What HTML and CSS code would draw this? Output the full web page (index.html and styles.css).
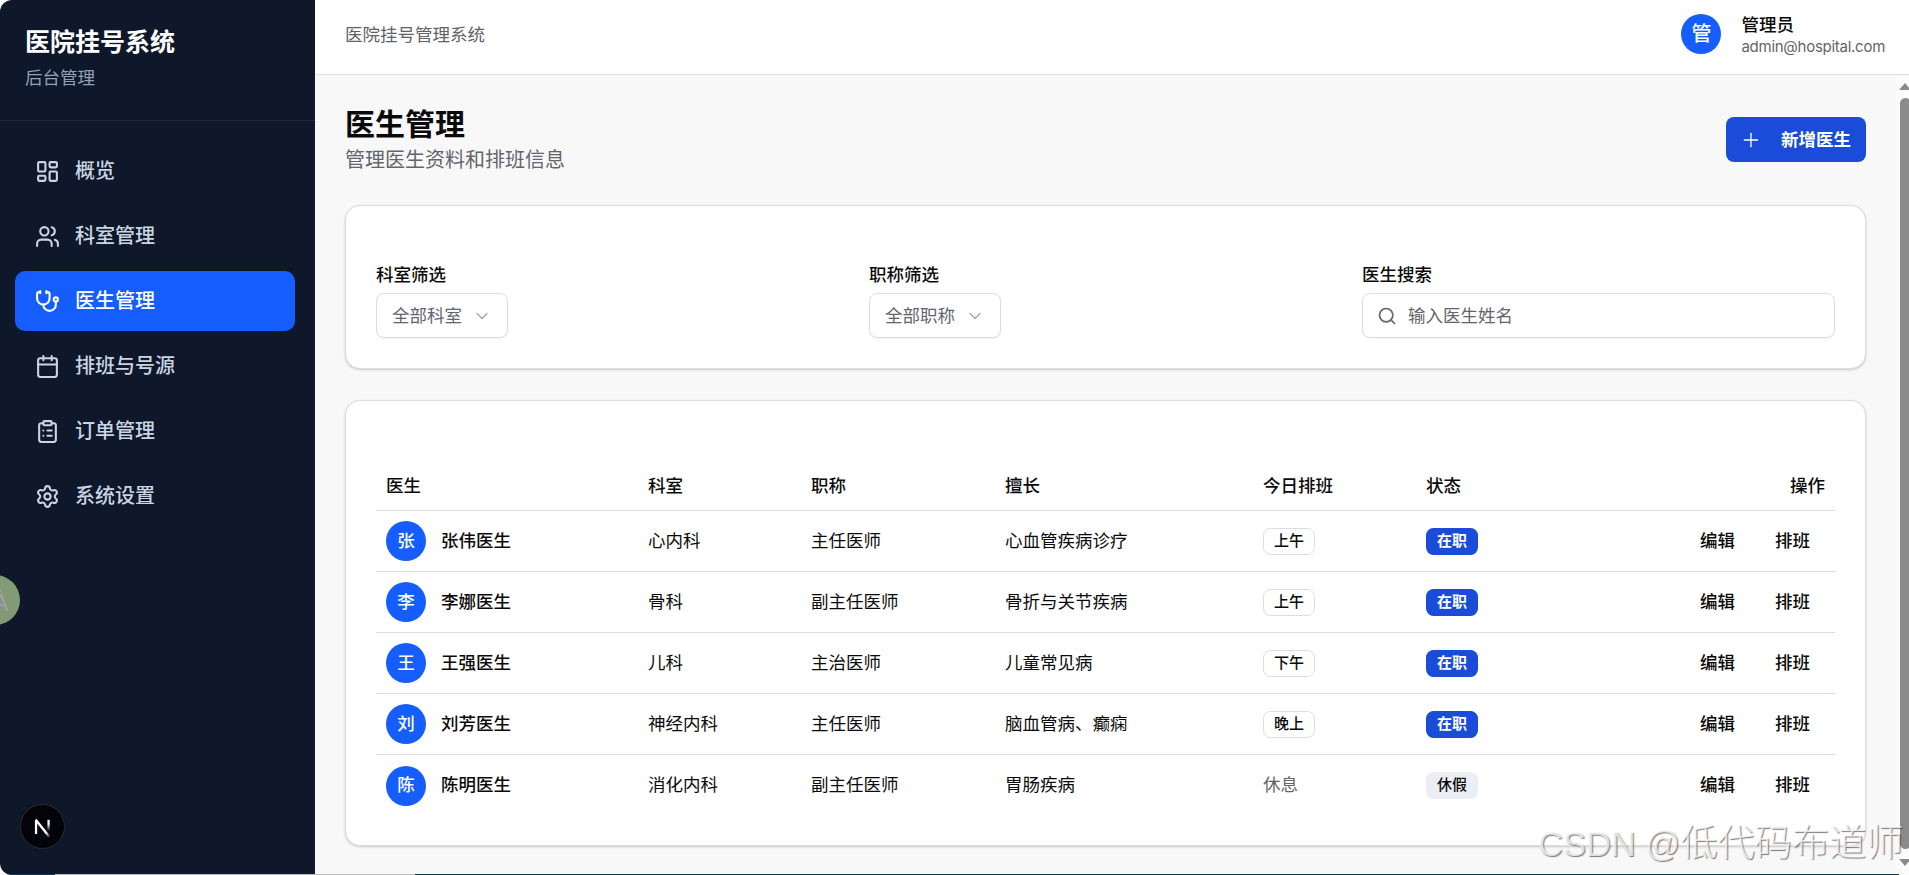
FILE: index.html
```
<!DOCTYPE html>
<html lang="zh-CN">
<head>
	<meta charset="utf-8">
	<title>医院挂号系统</title>
	<link rel="stylesheet" href="styles.css">
</head>
<body>
	<div class="app">
		<aside class="sidebar">
			<div class="brand">
				<h1>医院挂号系统</h1>
				<p>后台管理</p>
			</div>
			<nav class="nav">
				<a class="nav-item">
					<svg class="icon" viewBox="0 0 24 24"><rect width="7" height="9" x="3" y="3" rx="1"/><rect width="7" height="5" x="14" y="3" rx="1"/><rect width="7" height="9" x="14" y="12" rx="1"/><rect width="7" height="5" x="3" y="16" rx="1"/></svg>
					<span>概览</span>
				</a>
				<a class="nav-item">
					<svg class="icon" viewBox="0 0 24 24"><path d="M16 21v-2a4 4 0 0 0-4-4H6a4 4 0 0 0-4 4v2"/><path d="M16 3.128a4 4 0 0 1 0 7.744"/><path d="M22 21v-2a4 4 0 0 0-3-3.87"/><circle cx="9" cy="7" r="4"/></svg>
					<span>科室管理</span>
				</a>
				<a class="nav-item active">
					<svg class="icon" viewBox="0 0 24 24"><path d="M11 2v2"/><path d="M5 2v2"/><path d="M5 3H4a2 2 0 0 0-2 2v4a6 6 0 0 0 12 0V5a2 2 0 0 0-2-2h-1"/><path d="M8 15a6 6 0 0 0 12 0v-3"/><circle cx="20" cy="10" r="2"/></svg>
					<span>医生管理</span>
				</a>
				<a class="nav-item">
					<svg class="icon" viewBox="0 0 24 24"><path d="M8 2v4"/><path d="M16 2v4"/><rect width="18" height="18" x="3" y="4" rx="2"/><path d="M3 10h18"/></svg>
					<span>排班与号源</span>
				</a>
				<a class="nav-item">
					<svg class="icon" viewBox="0 0 24 24"><rect width="8" height="4" x="8" y="2" rx="1"/><path d="M16 4h2a2 2 0 0 1 2 2v14a2 2 0 0 1-2 2H6a2 2 0 0 1-2-2V6a2 2 0 0 1 2-2h2"/><path d="M12 11h4"/><path d="M12 16h4"/><path d="M8 11h.01"/><path d="M8 16h.01"/></svg>
					<span>订单管理</span>
				</a>
				<a class="nav-item">
					<svg class="icon" viewBox="0 0 24 24"><path d="M9.671 4.136a2.34 2.34 0 0 1 4.659 0 2.34 2.34 0 0 0 3.319 1.915 2.34 2.34 0 0 1 2.33 4.033 2.34 2.34 0 0 0 0 3.831 2.34 2.34 0 0 1-2.33 4.033 2.34 2.34 0 0 0-3.319 1.915 2.34 2.34 0 0 1-4.659 0 2.34 2.34 0 0 0-3.32-1.915 2.34 2.34 0 0 1-2.33-4.033 2.34 2.34 0 0 0 0-3.831A2.34 2.34 0 0 1 6.35 6.051a2.34 2.34 0 0 0 3.319-1.915"/><circle cx="12" cy="12" r="3"/></svg>
					<span>系统设置</span>
				</a>
			</nav>
		</aside>

		<div class="main">
			<header class="topbar">
				<span class="topbar-title">医院挂号管理系统</span>
				<div class="user">
					<span class="avatar">管</span>
					<div class="user-info">
						<div class="user-name">管理员</div>
						<div class="user-mail">admin@hospital.com</div>
					</div>
				</div>
			</header>

			<div class="body">
				<div class="content">
					<div class="page-head">
						<div>
							<h2>医生管理</h2>
							<p>管理医生资料和排班信息</p>
						</div>
						<button class="btn-primary">
							<svg class="icon-sm thin" viewBox="0 0 24 24"><path d="M4 12h16"/><path d="M12 4v16"/></svg>
							<span>新增医生</span>
						</button>
					</div>

					<section class="card filters">
						<div class="field">
							<label>科室筛选</label>
							<button class="select"><span>全部科室</span><svg class="chevron" viewBox="0 0 24 24"><path d="m6 9 6 6 6-6"/></svg></button>
						</div>
						<div class="field">
							<label>职称筛选</label>
							<button class="select"><span>全部职称</span><svg class="chevron" viewBox="0 0 24 24"><path d="m6 9 6 6 6-6"/></svg></button>
						</div>
						<div class="field">
							<label>医生搜索</label>
							<div class="search">
								<svg class="icon-sm" viewBox="0 0 24 24"><circle cx="11" cy="11" r="8"/><path d="m21 21-4.3-4.3"/></svg>
								<span>输入医生姓名</span>
							</div>
						</div>
					</section>

					<section class="card list">
						<table>
							<colgroup>
								<col class="c-doctor"><col class="c-dept"><col class="c-title"><col class="c-skill"><col class="c-shift"><col class="c-status"><col>
							</colgroup>
							<thead>
								<tr><th>医生</th><th>科室</th><th>职称</th><th>擅长</th><th>今日排班</th><th>状态</th><th class="right">操作</th></tr>
							</thead>
							<tbody>
								<tr>
									<td><div class="doctor"><span class="avatar small">张</span>张伟医生</div></td>
									<td>心内科</td><td>主任医师</td><td>心血管疾病诊疗</td>
									<td><span class="badge outline">上午</span></td>
									<td><span class="badge primary">在职</span></td>
									<td><div class="actions"><a>编辑</a><a>排班</a></div></td>
								</tr>
								<tr>
									<td><div class="doctor"><span class="avatar small">李</span>李娜医生</div></td>
									<td>骨科</td><td>副主任医师</td><td>骨折与关节疾病</td>
									<td><span class="badge outline">上午</span></td>
									<td><span class="badge primary">在职</span></td>
									<td><div class="actions"><a>编辑</a><a>排班</a></div></td>
								</tr>
								<tr>
									<td><div class="doctor"><span class="avatar small">王</span>王强医生</div></td>
									<td>儿科</td><td>主治医师</td><td>儿童常见病</td>
									<td><span class="badge outline">下午</span></td>
									<td><span class="badge primary">在职</span></td>
									<td><div class="actions"><a>编辑</a><a>排班</a></div></td>
								</tr>
								<tr>
									<td><div class="doctor"><span class="avatar small">刘</span>刘芳医生</div></td>
									<td>神经内科</td><td>主任医师</td><td>脑血管病、癫痫</td>
									<td><span class="badge outline">晚上</span></td>
									<td><span class="badge primary">在职</span></td>
									<td><div class="actions"><a>编辑</a><a>排班</a></div></td>
								</tr>
								<tr>
									<td><div class="doctor"><span class="avatar small">陈</span>陈明医生</div></td>
									<td>消化内科</td><td>副主任医师</td><td>胃肠疾病</td>
									<td class="muted">休息</td>
									<td><span class="badge secondary">休假</span></td>
									<td><div class="actions"><a>编辑</a><a>排班</a></div></td>
								</tr>
							</tbody>
						</table>
					</section>
				</div>
				<div class="scrollbar">
					<span class="arrow up"></span>
					<span class="thumb"></span>
					<span class="arrow down"></span>
				</div>
			</div>
		</div>
	</div>

	<div class="translate-tab"><span>A</span></div>
	<div class="dev-badge">
		<svg viewBox="0 0 40 40">
			<defs>
				<linearGradient id="stem" x1="0" y1="0" x2="0" y2="1"><stop offset=".35" stop-color="#fff"/><stop offset="1" stop-color="#fff" stop-opacity="0"/></linearGradient>
				<linearGradient id="diag" x1="0" y1="0" x2="1" y2="1"><stop offset=".75" stop-color="#fff"/><stop offset="1" stop-color="#fff" stop-opacity=".1"/></linearGradient>
			</defs>
			<path d="M14 27V13.8" stroke="#fff" stroke-width="2.1"/>
			<path d="M13.7 13.8 26.5 29.8" stroke="url(#diag)" stroke-width="2.2"/>
			<rect x="24.6" y="13.8" width="2.1" height="10.5" fill="url(#stem)"/>
		</svg>
	</div>
	<div class="watermark"><span>CSDN @</span>低代码布道师</div>
	<div class="window-edge"></div>
</body>
</html>
```

FILE: styles.css
```
*{
	box-sizing: border-box;
}
html,body{
	margin: 0;
	padding: 0;
	height: 100%;
	overflow: hidden;
}
body{
	position: relative;
	background: #fff;
	color: #0a0a0a;
	font-family: "Liberation Sans", "Noto Sans CJK SC", sans-serif;
	font-size: 17.5px;
	line-height: 25px;
}
h1,h2,p{
	margin: 0;
}
button{
	font: inherit;
	border: none;
}
svg{
	fill: none;
	stroke: currentColor;
	stroke-width: 2;
	stroke-linecap: round;
	stroke-linejoin: round;
	flex-shrink: 0;
}
.app{
	display: flex;
	height: 100vh;
}

/* sidebar */
.sidebar{
	width: 315px;
	flex-shrink: 0;
	background: #0f172b;
	border-radius: 12px 0 0 12px;
}
.brand{
	height: 121px;
	padding: 25px 25px 0;
	border-bottom: 1px solid #1d293d;
}
.brand h1{
	color: #fff;
	font-size: 25px;
	font-weight: 700;
	line-height: 35px;
}
.brand p{
	margin-top: 6px;
	color: #90a1b9;
}
.nav{
	display: flex;
	flex-direction: column;
	gap: 5px;
	padding: 20px 20px 0 15px;
}
.nav-item{
	display: flex;
	align-items: center;
	gap: 15px;
	height: 60px;
	padding: 0 20px;
	border-radius: 10px;
	color: #cad5e2;
	font-size: 20px;
	font-weight: 500;
}
.nav-item span{
	padding-top: 1px;
}
.nav-item.active{
	background: #155dfc;
	color: #fff;
}
.icon{
	width: 25px;
	height: 25px;
}
.icon-sm{
	width: 20px;
	height: 20px;
}

/* top bar */
.main{
	flex: 1;
	min-width: 0;
	display: flex;
	flex-direction: column;
}
.topbar{
	display: flex;
	justify-content: space-between;
	align-items: center;
	height: 75px;
	padding: 0 24px 6px 30px;
	border-bottom: 1px solid #dcdce4;
}
.topbar-title{
	padding-top: 2px;
	color: #5f6368;
}
.user{
	display: flex;
	align-items: center;
	gap: 20px;
}
.user-info{
	padding-top: 2px;
}
.user-name{
	font-weight: 500;
	line-height: 24px;
}
.user-mail{
	color: #62656d;
	font-family: Inter, sans-serif;
	font-size: 15px;
	letter-spacing: -.27px;
	line-height: 20px;
}
.avatar{
	display: flex;
	align-items: center;
	justify-content: center;
	width: 40px;
	height: 40px;
	border-radius: 50%;
	background: #155dfc;
	color: #fff;
	font-size: 20px;
	font-weight: 500;
}
.avatar.small{
	font-size: 17.5px;
}

/* content */
.body{
	flex: 1;
	display: flex;
	background: #f8f8f8;
}
.content{
	flex: 1;
	padding: 30px 30px 0;
}
.page-head{
	display: flex;
	justify-content: space-between;
	align-items: center;
	height: 70px;
	margin-bottom: 30px;
}
.page-head h2{
	font-size: 30px;
	line-height: 40px;
}
.page-head p{
	color: #62656d;
	font-size: 20px;
	line-height: 30px;
}
.btn-primary{
	display: flex;
	align-items: center;
	gap: 20px;
	height: 45px;
	margin-top: -1px;
	padding: 0 15px;
	border-radius: 8px;
	background: #1a4bd9;
	color: #fff;
	font-weight: 600;
}
.btn-primary span{
	padding-top: 1px;
}
.thin{
	stroke-width: 1.6;
}
.card{
	background: #fff;
	border: 1px solid #dcdce4;
	border-radius: 15px;
	box-shadow: 0 1px 3px rgba(0,0,0,.1), 0 1px 2px rgba(0,0,0,.1);
}
.filters{
	display: grid;
	grid-template-columns: repeat(3, 1fr);
	gap: 20px;
	height: 164px;
	margin-bottom: 31px;
	padding: 57px 30px 0;
}
.field{
	display: flex;
	flex-direction: column;
	align-items: flex-start;
	gap: 5px;
}
.field label{
	font-weight: 500;
}
.select,
.search{
	display: flex;
	align-items: center;
	height: 45px;
	padding: 0 15px;
	border: 1px solid #dcdce4;
	border-radius: 8px;
	background: #fff;
	box-shadow: 0 1px 2px rgba(0,0,0,.05);
	color: #62656d;
}
.select span,
.search span{
	padding-top: 1px;
}
.select{
	gap: 10px;
}
.chevron{
	width: 20px;
	height: 20px;
	stroke-width: 1.5;
	opacity: .6;
}
.search{
	width: 100%;
	padding-left: 14px;
	gap: 11px;
}

/* doctors table */
.list{
	height: 446px;
	padding: 59px 30px 0;
}
table{
	width: 100%;
	table-layout: fixed;
	border-collapse: separate;
	border-spacing: 0;
}
.c-doctor{ width: 262px; }
.c-dept{ width: 163px; }
.c-title{ width: 194px; }
.c-skill{ width: 258px; }
.c-shift{ width: 163px; }
.c-status{ width: 163px; }
th,td{
	padding: 0 10px;
	text-align: left;
	border-bottom: 1px solid #dcdce4;
}
th{
	height: 51px;
	padding-top: 2px;
	font-weight: 500;
}
td{
	height: 61px;
}
tbody tr:last-child td{
	border-bottom: none;
}
th.right{
	text-align: right;
}
.muted{
	color: #62656d;
}
.doctor{
	display: flex;
	align-items: center;
	gap: 15px;
	font-weight: 500;
}
.badge{
	display: flex;
	align-items: center;
	justify-content: center;
	width: 52px;
	height: 27px;
	padding-bottom: 2px;
	border-radius: 7.5px;
	font-size: 15px;
	font-weight: 500;
}
.badge.outline{
	border: 1px solid #dcdce4;
}
.badge.primary{
	background: #1a4bd9;
	color: #fff;
	font-weight: 600;
}
.badge.secondary{
	background: #ebeef5;
}
.actions{
	display: flex;
	justify-content: flex-end;
	gap: 40px;
	padding-right: 15px;
	font-weight: 500;
}

/* scrollbar, cut off by the window on the right */
.scrollbar{
	display: flex;
	flex-direction: column;
	width: 13px;
	padding: 8px 0 9px 3px;
	background: #fbfbfb;
	overflow: hidden;
}
.arrow{
	width: 0;
	flex-shrink: 0;
	border: 6px solid transparent;
}
.arrow.up{
	border-top: none;
	border-bottom: 7px solid #8b8b8b;
}
.arrow.down{
	border-bottom: none;
	border-top: 7px solid #8b8b8b;
}
.thumb{
	flex: 1;
	width: 11px;
	margin: 8px 0 10px 1px;
	border-radius: 6px;
	background: #8b8b8b;
}

/* floating things over the page */
.translate-tab{
	position: absolute;
	left: -30px;
	top: 575px;
	width: 50px;
	height: 50px;
	border-radius: 25px;
	background: #839a77;
	color: #a09fae;
	font-size: 23px;
	overflow: hidden;
}
.translate-tab span{
	position: absolute;
	left: 23px;
	top: 16px;
}
.translate-tab::before{
	content: "";
	position: absolute;
	left: 26px;
	top: 15px;
	width: 5px;
	height: 2px;
	background: #a09fae;
}
.dev-badge{
	position: absolute;
	left: 20px;
	top: 804px;
	width: 45px;
	height: 45px;
	border: 1px solid #2b2b2b;
	border-radius: 50%;
	background: #03040a;
}
.dev-badge svg{
	display: block;
	width: 43px;
	height: 43px;
	stroke: none;
	stroke-linecap: butt;
}
.watermark{
	position: absolute;
	left: 1538px;
	top: 818px;
	color: rgba(255,255,255,.75);
	font-size: 37.2px;
	font-weight: 300;
	line-height: 50px;
	white-space: nowrap;
	text-shadow: 1px 1px 1px rgba(0,0,0,.5);
}
.watermark span{
	font-size: 34.5px;
}
.window-edge{
	position: absolute;
	left: 10px;
	right: 10px;
	bottom: 0;
	height: 1px;
	background: linear-gradient(to right, #0b3d52 45px, #bdbdbd 45px, #bdbdbd 405px, #0b3d52 405px);
}
```
